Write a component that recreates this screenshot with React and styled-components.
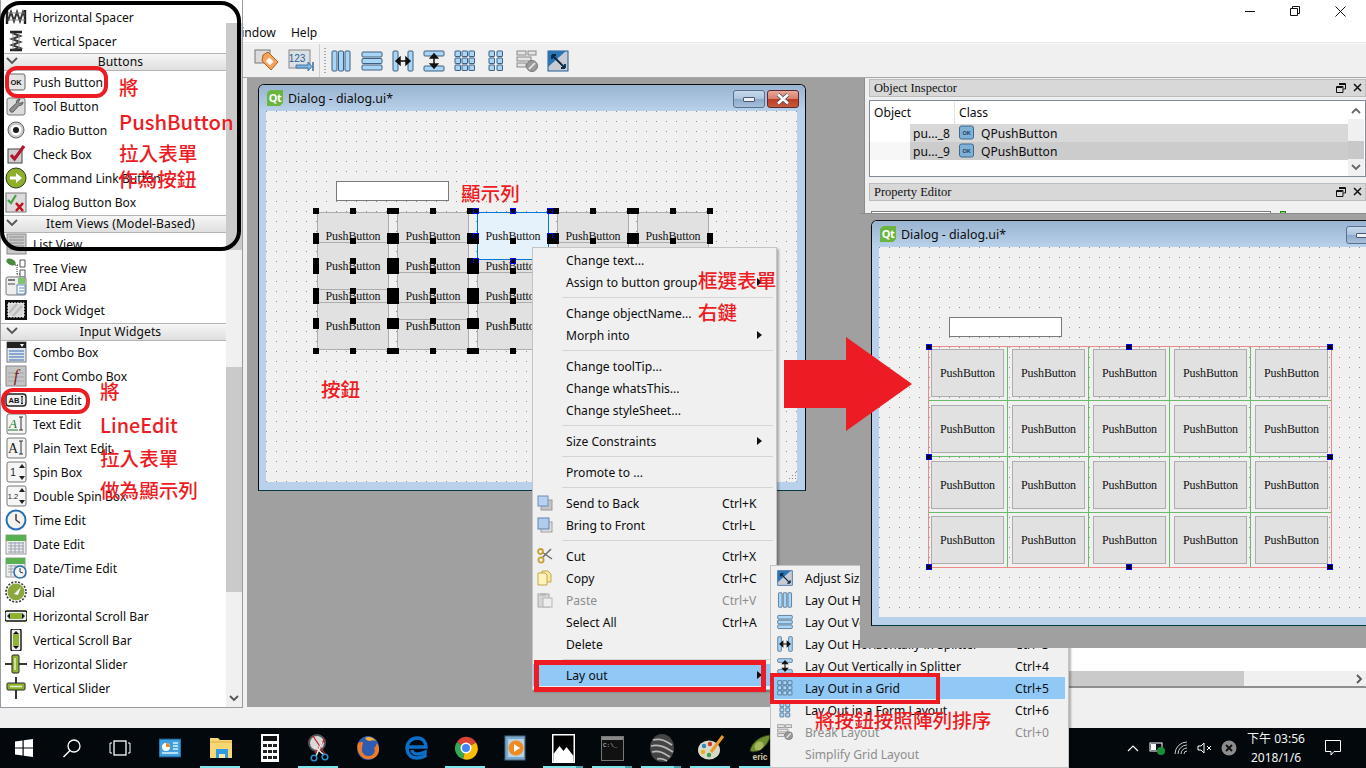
import React from "react";
import styled, { createGlobalStyle, css } from "styled-components";

const UI = `"Noto Sans", "Noto Sans CJK TC", sans-serif`;
const OLD = `"Liberation Serif", "Noto Sans CJK TC", serif`;
const RED = "#ed1c24";

const Global = createGlobalStyle`
  html, body { margin: 0; padding: 0; background: #f0f0f0; }
  * { box-sizing: border-box; }
`;

const Page = styled.div`
  position: relative; width: 1366px; height: 768px; overflow: hidden;
  display: flex; flex-direction: column; background: #f0f0f0;
  font-family: ${UI}; font-size: 12.1px; color: #0c0c0c;
`;
const Desk = styled.div`display: flex; height: 728px;`;

/* ---------- widget box ---------- */
const WidgetBox = styled.aside`
  position: relative; z-index: 2; flex: 0 0 243px; height: 708px; display: flex;
  background: #fff; border: 1px solid #9a9aa2; border-width: 0 1px 1px 1px;
`;
const WidgetList = styled.div`flex: 1; padding-top: 5px; min-width: 0;`;
const Row = styled.div`
  display: flex; align-items: center; height: 24px; padding-left: 4px; gap: 6px;
  margin-top: ${p => p.$tuck || 0}px; white-space: nowrap;
`;
const RowIcon = styled.span`display: flex; width: 22px; height: 22px; flex: none;`;
const SectionHeader = styled.div`
  position: relative; height: 18px; line-height: 16px; text-align: center;
  background: linear-gradient(#f6f6f6, #dfdfdf);
  border-top: 1px solid #b4b4b4; border-bottom: 1px solid #b4b4b4;
  margin-top: ${p => p.$gap || 0}px; margin-bottom: -1px; padding-left: 14px; letter-spacing: .1px;
`;
const SectionChevron = styled.svg`position: absolute; left: 5px; top: 3px;`;
const Rail = styled.div`flex: 0 0 16px; display: flex; flex-direction: column; position: relative; background: #f0f0f0;`;
const RailPart = styled.div`
  flex: 0 0 ${p => p.$h}px;
  background: ${p => p.$tone === "thumb" ? "#cacaca" : p.$tone === "white" ? "#fff" : "#f0f0f0"};
`;
const RailArrow = styled.svg`position: absolute; left: 3px; bottom: 5px;`;

/* ---------- workspace ---------- */
const Workspace = styled.main`flex: 1; display: flex; flex-direction: column; min-width: 0;`;
const TitleStrip = styled.div`
  height: 22px; background: #fff; display: flex; justify-content: flex-end; align-items: center;
  padding-right: 20px; gap: 35px;
`;
const MenuBar = styled.nav`
  height: 21px; background: #fff; display: flex; align-items: center; gap: 15px;
  border-bottom: 1px solid #e6e6e6;
`;
const MenuLabel = styled.span`&:first-child { margin-left: -13px; }`;
const Toolbar = styled.div`
  height: 35px; background: #f0f0f0; border-top: 1px solid #fafafa; border-bottom: 1px solid #a8a8a8;
  display: flex; align-items: center; padding-left: 11px; gap: 8px;
`;
const ToolGroup = styled.div`display: flex; gap: ${p => p.$gap}px; align-items: center; margin-left: ${p => p.$shift || 0}px;`;
const ToolDivider = styled.div`width: 1px; height: 33px; background: #cfcfcf; margin-left: -3px;`;
const ToolGrip = styled.div`
  width: 2px; height: 26px; margin: 0 0 0 -4px;
  background: repeating-linear-gradient(#a8a8a8 0 1px, transparent 1px 3px);
`;
const Main = styled.div`flex: 1; display: flex; min-height: 0;`;
const MdiColumn = styled.div`
  flex: 0 0 622px; padding-left: 4px; display: flex; flex-direction: column; height: 629px;
`;
const Mdi = styled.div`position: relative; isolation: isolate; flex: 1; background: #a0a0a0; border-right: 1px solid #8c8c8c;`;

/* ---------- designer window ---------- */
const Window = styled.div`
  position: absolute; left: ${p => p.$left}px; top: ${p => p.$top}px; width: ${p => p.$w}px; height: ${p => p.$h}px;
  display: flex; flex-direction: column; background: #b9d1ea; padding: 0 8px 8px 7px;
  border: 1px solid #0a0a0a; border-bottom-color: #053a44; border-radius: 6px 6px 0 0;
`;
const WinTitle = styled.div`
  position: relative; height: 26px; flex: none; margin: 0 -8px 0 -7px; padding-left: 8px; display: flex; align-items: center; gap: 5px;
  font-size: 12.4px; background: linear-gradient(#99b4d1, #b9d1ea); border-radius: 5px 5px 0 0;
`;
const QtLogo = styled.span`
  width: 16px; height: 16px; flex: none; background: #69b53f; color: #fff; font: bold 11px/15px ${UI};
  text-align: center; letter-spacing: -.5px;
  clip-path: polygon(3px 0, 100% 0, 100% calc(100% - 3px), calc(100% - 3px) 100%, 0 100%, 0 3px);
`;
const CaptionBtn = styled.span`
  position: absolute; top: 5px; left: ${p => p.$left}px; width: 32px; height: 18px; border-radius: 3px;
  border: 1px solid ${p => p.$close ? "#5a2a30" : "#57708f"}; display: flex; align-items: center; justify-content: center;
  background: ${p => p.$close ? "linear-gradient(#e8a898 0, #d9806c 48%, #bd3c22 52%, #c75a3c 100%)" : "linear-gradient(#c8d9ec 0, #aec4dd 48%, #8eaacb 52%, #a8c0da 100%)"};
`;
const MinBar = styled.span`width: 12px; height: 5px; background: #eef0f4; border: 1px solid #4a5a70; border-radius: 1px;`;
const Client = styled.div`
  position: relative; flex: 1; background-color: #f0f0f0;
  background-image: radial-gradient(circle at .5px .5px, #909090 .6px, transparent .7px);
  background-size: 10px 10px;
`;
const LineEdit = styled.div`
  position: absolute; left: 70px; top: 70px; width: 113px; height: 20px; background: #fff; border: 1px solid #7a7a7a;
`;
const FormCanvas = styled.div`position: absolute; left: 51px; top: 101px; width: 400px; height: 140px;`;
const OldButton = styled.div`
  position: absolute; left: ${p => p.$x}px; top: ${p => p.$y}px; width: 72px; height: 48px; z-index: ${p => p.$z};
  display: flex; align-items: center; justify-content: center;
  font: 12px ${OLD}; color: #111; letter-spacing: -.1px;
  background: ${p => p.$selected ? "#e5f1fb" : "#e1e1e1"}; border: 1px solid ${p => p.$selected ? "#0078d7" : "#adadad"};
`;
const FormRule = styled.div`position: absolute; left: ${p => p.$x}px; top: ${p => p.$y}px; width: 72px; height: 1px; background: #adadad; z-index: 8;`;
const Handle = styled.span`
  position: absolute; left: ${p => p.$x - 3}px; top: ${p => p.$y - 3}px; width: 6px; height: 6px; z-index: 10;
  background: #000; ${p => p.$blue && css`border: 1px solid #0000ff;`}
`;
const Grip = styled.svg`position: absolute; right: 0; bottom: 0;`;

/* grid layout of the second window */
const GridLayout = styled.div`
  position: absolute; left: 50px; top: 100px; display: grid;
  grid-template-columns: 78px repeat(4, 81px); grid-template-rows: 53px 56px 56px 55px;
  outline: 1px solid #ee8a8a;
`;
const GridCell = styled.div`
  display: flex; justify-content: flex-end; align-items: flex-end; padding: 0 3px 3px 0;
  border-left: ${p => p.$col ? "1px solid #69ba69" : "0"}; border-top: ${p => p.$row ? "1px solid #69ba69" : "0"};
`;
const GridButton = styled.div`
  width: 73px; height: 48px; display: flex; align-items: center; justify-content: center;
  font: 12px ${OLD}; color: #111; letter-spacing: -.1px; background: #e1e1e1; border: 1px solid #adadad;
`;

/* ---------- right docks ---------- */
const DockColumn = styled.section`flex: 1; display: flex; flex-direction: column; padding: 1px 0 0 4px; min-width: 0; height: 610px;`;
const DockHead = styled.header`
  height: 18px; flex: none; background: #d8d8d8; border: 1px solid #bcbcbc; display: flex; align-items: center;
  padding: 0 3px 0 4px; font: 12.5px ${OLD}; color: #111; margin-top: ${p => p.$gap || 0}px;
`;
const DockTools = styled.span`margin-left: auto; display: flex; gap: 7px;`;
const ObjectTable = styled.div`
  position: relative; flex: none; margin-top: 3px; height: 77px; background: #fff; border: 1px solid #7f8a96; padding-right: 17px;
`;
const ObjectHeader = styled.div`display: grid; grid-template-columns: 85px 1fr; height: 23px; align-items: center;`;
const HeaderCell = styled.span`
  padding-left: ${p => p.$pad}px; height: 23px; line-height: 23px; border-right: ${p => p.$sep ? "1px solid #e4e4e4" : 0};
`;
const ObjectRow = styled.div`
  display: flex; height: 18px; align-items: center;
  background: linear-gradient(90deg, ${p => p.$alt ? "#f7f7f7" : "#fff"} 40px, ${p => p.$alt ? "#cccccc" : "#d8d8d8"} 40px);
  padding-left: 43px;
`;
const ObjName = styled.span`width: 46px; flex: none;`;
const ObjClass = styled.span`margin-left: 6px;`;
const TableRail = styled.div`
  position: absolute; right: 1px; top: 0; bottom: 0; width: 16px; background: #f0f0f0;
  display: flex; flex-direction: column;
`;
const TableRailWhite = styled.div`height: 18px; background: #fff; display: flex; align-items: center; justify-content: center;`;
const TableThumb = styled.div`margin-top: 22px; height: 18px; background: #c8c8c8;`;
const TableDown = styled.div`flex: 1; display: flex; align-items: center; justify-content: center;`;
const PropertyBody = styled.div`
  flex: 1; display: flex; flex-direction: column; padding-top: 10px; min-height: 0;
`;
const PropertyTools = styled.div`display: flex; height: 6px; align-items: flex-start; padding-left: 2px;`;
const PropertySearch = styled.div`width: 400px; height: 12px; background: #fff; border: 1px solid #7a7a7a;`;
const PropertyFlag = styled.span`width: 6px; height: 6px; margin-left: 9px; background: #7be05a; border: 1px solid #2f7d1f;`;
const PropertySheet = styled.div`
  flex: 1; background: #fff; margin-top: 4px; border-bottom: 2px solid #8f8f8f; display: flex; flex-direction: column; justify-content: flex-end;
`;
const HScroll = styled.div`height: 15px; background: #f0f0f0; position: relative;`;
const HThumb = styled.div`width: 375px; height: 15px; background: #cacaca;`;
const HArrow = styled.svg`position: absolute; right: 3px; top: 3px;`;

/* ---------- menus ---------- */
const PopMenu = styled.div`
  position: absolute; left: ${p => p.$x}px; top: ${p => p.$y}px; width: ${p => p.$w}px; z-index: ${p => p.$z};
  background: #f0f0f0; border: 1px solid #c4c4c4; box-shadow: 2px 2px 2px rgba(0,0,0,.28);
  padding: ${p => p.$pad};
`;
const MenuItem = styled.div`
  position: relative; display: flex; align-items: center; height: 22px; padding-left: ${p => p.$pl}px; white-space: nowrap;
  color: ${p => p.$off ? "#8d8d8d" : "#0c0c0c"};
  background: ${p => p.$on ? "#90c8f6" : "transparent"}; margin-right: ${p => p.$mr || 0}px;
`;
const MenuIcon = styled.span`width: 16px; height: 16px; flex: none; display: flex; margin-right: ${p => p.$gap}px;`;
const Shortcut = styled.span`margin-left: auto; width: ${p => p.$w}px; flex: none;`;
const MenuArrow = styled.span`
  position: absolute; right: 14px; top: 7px; width: 0; height: 0;
  border-left: 5px solid #111; border-top: 4px solid transparent; border-bottom: 4px solid transparent;
`;
const MenuSep = styled.div`height: 9px; padding: 4px 3px 0 ${p => p.$pl}px;
  &::after { content: ""; display: block; height: 1px; background: #d4d4d4; }
`;

/* ---------- pasted screenshot ---------- */
const Pasted = styled.div`
  position: absolute; left: 860px; top: 213px; width: 506px; height: 435px; background: #a0a0a0; overflow: hidden; z-index: 5;
  border-top: 1px solid #8c8c8c;
`;
const BigArrow = styled.svg`position: absolute; left: 784px; top: 337px; z-index: 7;`;

/* ---------- annotations ---------- */
const RedText = styled.div`
  position: absolute; left: ${p => p.$x}px; top: ${p => p.$y - 15}px; z-index: 9; line-height: 30px; white-space: nowrap;
  color: ${RED}; font-family: "Noto Sans CJK TC", sans-serif; font-weight: 500; font-size: ${p => p.$size || 19.6}px;
`;
const Outline = styled.div`
  position: absolute; left: ${p => p.$x}px; top: ${p => p.$y}px; width: ${p => p.$w}px; height: ${p => p.$h}px; z-index: 8;
  border: ${p => p.$b}px solid ${p => p.$color || RED}; border-radius: ${p => p.$r || 0}px;
`;

/* ---------- taskbar ---------- */
const Taskbar = styled.footer`
  height: 40px; background: #02080c; display: flex; align-items: center; position: relative; color: #fff;
`;
const TaskItem = styled.div`
  position: relative; width: ${p => p.$w || 49}px; height: 40px; flex: none; display: flex; align-items: center; justify-content: center;
  ${p => p.$open && css`&::after { content: ""; position: absolute; left: 4px; right: 5px; bottom: 0; height: 2px; background: #7fe3ea; }`}
  ${p => p.$stack && css`&::before { content: ""; position: absolute; right: 5px; bottom: 0; width: 7px; height: 2px; background: #4aa3aa; z-index: 1; }`}
`;
const Tray = styled.div`margin-left: auto; display: flex; align-items: center; height: 40px;`;
const TrayIcon = styled.span`display: flex; width: 24px; justify-content: center;`;
const Clock = styled.div`
  width: 66px; margin-left: 2px; text-align: center; font-size: 12px; line-height: 19px; color: #f4f4f4;
`;
const Notify = styled.span`display: flex; width: 48px; margin-right: 9px; justify-content: center;`;

/* ---------- drawings ---------- */
const S = ({ children, s = 22, v = 22 }) => <svg width={s} height={s} viewBox={`0 0 ${v} ${v}`}>{children}</svg>;

const Icons = {
  hspacer: <S><path d="M2 4v14M20 4v14" stroke="#222" strokeWidth="2.4"/><path d="M3 15 6 6l3 9 3-9 3 9 3-9 2 5" fill="none" stroke="#333" strokeWidth="2"/><path d="M3 7h17M3 14h17" stroke="#888"/></S>,
  vspacer: <S><path d="M5 2h12M5 20h12" stroke="#222" strokeWidth="2.4"/><path d="M7 3l8 3-8 3 8 3-8 3 8 3-8 2" fill="none" stroke="#333" strokeWidth="2"/><path d="M8 3v16M14 3v16" stroke="#999"/></S>,
  push: <S><rect x="2" y="3" width="18" height="16" rx="2" fill="#e4e4e4" stroke="#666"/><path d="M3 18h17v1H3z" fill="#9a9a9a"/><text x="11" y="14" fontSize="7.5" fontFamily="Liberation Sans" fontWeight="700" textAnchor="middle" fill="#111">OK</text></S>,
  tool: <S><rect x="2" y="3" width="18" height="17" rx="2" fill="#dcdcdc" stroke="#777"/><path d="M15 4c-3 0-4 2-3.500 4L5 14c-1 2 1 4 3 3l6-6.500c2 .5 4-1 4-3.500l-3 1.500-1.500-1.500z" fill="#8f8f8f" stroke="#444" strokeWidth=".8"/></S>,
  radio: <S><circle cx="11" cy="11" r="8" fill="#c8c8c8" stroke="#666"/><circle cx="11" cy="11" r="5.500" fill="#fff"/><circle cx="11" cy="11" r="3" fill="#1a1a1a"/></S>,
  check: <S><rect x="3" y="6" width="14" height="14" fill="#d0d0d0" stroke="#444"/><path d="M6 12l3.500 4L19 3" fill="none" stroke="#b3172e" strokeWidth="3.200"/></S>,
  command: <S><circle cx="11" cy="11" r="10" fill="#8fae2a" stroke="#2f3b23"/><path d="M5 9.500h6V6l6 5-6 5v-3.500H5z" fill="#fff"/></S>,
  dialogbox: <S><rect x="1" y="2" width="20" height="19" fill="#dcdcdc" stroke="#777"/><path d="M3 9l3 3 5-8" fill="none" stroke="#3fa23f" strokeWidth="2.200"/><path d="M11 12l7 8M18 12l-7 8" stroke="#c0151f" strokeWidth="2.600"/></S>,
  list: <S><rect x="2" y="1" width="19" height="20" fill="#c8c8c8" stroke="#888"/><path d="M4 4h15M4 7h15M4 10h15M4 13h15M4 16h15" stroke="#8c8c8c"/></S>,
  tree: <S><ellipse cx="6" cy="5" rx="5" ry="3" fill="#4c8a42" transform="rotate(25 6 5)"/><path d="M10 8h4M12 8v9M12 17h3" stroke="#333" strokeDasharray="1 1"/><path d="M15 3h5v7h-5zM15 13h5v7h-5z" fill="#fff" stroke="#555"/></S>,
  mdi: <S><rect x="1" y="2" width="20" height="18" rx="2" fill="#eee" stroke="#777"/><rect x="13" y="3" width="7" height="6" fill="#7ec46f"/><rect x="3" y="4" width="7" height="2" fill="#777"/><rect x="3" y="8" width="7" height="2" fill="#999"/><rect x="12" y="10" width="8" height="9" fill="#fff" stroke="#5b88bd"/><path d="M14 13h5M14 16h5" stroke="#5b88bd"/></S>,
  dock: <S><rect x="0" y="1" width="22" height="20" fill="#111"/><rect x="3" y="4" width="16" height="14" fill="#d9d9d9" stroke="#fff" strokeDasharray="2 1"/><path d="M4 14l8-9M8 17l9-10" stroke="#bbb" strokeWidth="2"/></S>,
  combo: <S><rect x="2" y="1" width="19" height="20" fill="#dfe5ee" stroke="#777"/><rect x="2" y="1" width="19" height="6" fill="#222"/><path d="M15 3h4l-2 3z" fill="#fff"/><path d="M4 10h15M4 13h15M4 16h15M4 19h15" stroke="#6d92c2" strokeWidth="1.600"/></S>,
  fontcombo: <S><rect x="1" y="1" width="20" height="20" fill="#c4c4c4" stroke="#888"/><path d="M3 8h16M3 12h16M3 16h16" stroke="#a6a6a6"/><text x="11" y="16" fontSize="17" fontFamily="Liberation Serif" fontStyle="italic" textAnchor="middle" fill="#7f1d22">f</text></S>,
  lineedit: <S><rect x="1" y="5" width="20" height="12" rx="3" fill="#eee" stroke="#222" strokeWidth="1.400"/><text x="9" y="14" fontSize="7.500" fontFamily="Liberation Sans" fontWeight="700" textAnchor="middle" fill="#111">AB</text><path d="M17 8v6M16 7.500h2M16 14.500h2" stroke="#111"/></S>,
  textedit: <S><rect x="2" y="1" width="19" height="20" rx="2" fill="#f4f4f4" stroke="#777"/><text x="8" y="15" fontSize="13" fontFamily="Liberation Serif" textAnchor="middle" fill="#1c7a2a" fontStyle="italic">A</text><path d="M3 17h10" stroke="#1c7a2a"/><path d="M16 4v13M14 4h4M14 17h4" stroke="#333"/></S>,
  plain: <S><rect x="2" y="1" width="19" height="20" rx="2" fill="#f4f4f4" stroke="#777"/><text x="8" y="16" fontSize="14" fontFamily="Liberation Serif" textAnchor="middle" fill="#222">A</text><path d="M16 4v13M14 4h4M14 17h4" stroke="#333"/></S>,
  spin: <S><rect x="2" y="1" width="19" height="20" rx="2" fill="#f6f6f6" stroke="#777"/><text x="8" y="15" fontSize="10" fontFamily="Liberation Sans" textAnchor="middle" fill="#222">1</text><path d="M17 3l3 4h-6zM17 19l3-4h-6z" fill="#222"/></S>,
  dspin: <S><rect x="2" y="1" width="19" height="20" rx="2" fill="#f6f6f6" stroke="#777"/><text x="8" y="14" fontSize="7.500" fontFamily="Liberation Sans" textAnchor="middle" fill="#222">1.2</text><path d="M17 3l3 4h-6zM17 19l3-4h-6z" fill="#222"/></S>,
  time: <S><circle cx="11" cy="11" r="9.500" fill="#f2f2ee" stroke="#2a6fb5" strokeWidth="2"/><path d="M11 5v6l4 3" fill="none" stroke="#333" strokeWidth="1.400"/></S>,
  date: <S><rect x="1" y="2" width="20" height="19" fill="#eee" stroke="#999"/><rect x="1" y="2" width="20" height="6" fill="#58b050"/><path d="M3 10h16M3 13h16M3 16h16M3 19h16M6 9v11M10 9v11M14 9v11M18 9v11" stroke="#9aa3b0"/></S>,
  datetime: <S><rect x="1" y="1" width="19" height="19" fill="#eee" stroke="#999"/><rect x="1" y="1" width="19" height="6" fill="#58b050"/><path d="M3 9h15M3 12h15M3 15h15M6 8v11M10 8v11M14 8v11" stroke="#9aa3b0"/><circle cx="15" cy="15" r="6" fill="#f2f2ee" stroke="#2a6fb5" strokeWidth="1.600"/><path d="M15 11v4l3 1" fill="none" stroke="#333"/></S>,
  dial: <S><circle cx="11" cy="11" r="10" fill="none" stroke="#333" strokeWidth="1.600" strokeDasharray="2 1.500"/><circle cx="11" cy="11" r="8.500" fill="#8ba83c"/><path d="M9 13l7-7-3 8z" fill="#f4f4f4"/></S>,
  hscroll: <S><rect x="0" y="6" width="22" height="10" rx="2" fill="#eee" stroke="#111" strokeWidth="1.400"/><rect x="5" y="8" width="12" height="6" fill="#8db52f"/><path d="M2 11l3-3v6zM20 11l-3-3v6z" fill="#111"/></S>,
  vscroll: <S><rect x="6" y="0" width="10" height="22" rx="2" fill="#eee" stroke="#111" strokeWidth="1.400"/><rect x="8" y="5" width="6" height="12" fill="#8db52f"/><path d="M11 2l3 3H8zM11 20l3-3H8z" fill="#111"/></S>,
  hslider: <S><path d="M0 11h22" stroke="#222" strokeWidth="1.800"/><rect x="7" y="2" width="7" height="18" rx="1" fill="#8db52f" stroke="#2a2a2a"/><path d="M10 5v12" stroke="#e8f0c8" strokeWidth="1.500"/></S>,
  vslider: <S><path d="M11 0v22" stroke="#222" strokeWidth="1.800"/><rect x="2" y="6" width="18" height="7" rx="1" fill="#8db52f" stroke="#2a2a2a"/><path d="M5 9.500h12" stroke="#e8f0c8" strokeWidth="1.500"/></S>,
};

const blue = { fill: "#a9d6f7", stroke: "#3f5f80" };
const Lay = {
  h: <S><rect x="2" y="1" width="5" height="20" rx="1" {...blue}/><rect x="8.500" y="1" width="5" height="20" rx="1" {...blue}/><rect x="15" y="1" width="5" height="20" rx="1" {...blue}/></S>,
  v: <S><rect x="1" y="2" width="20" height="5" rx="1" {...blue}/><rect x="1" y="8.500" width="20" height="5" rx="1" {...blue}/><rect x="1" y="15" width="20" height="5" rx="1" {...blue}/></S>,
  hs: <S><rect x="1" y="1" width="5" height="20" rx="1" {...blue}/><rect x="16" y="1" width="5" height="20" rx="1" {...blue}/><path d="M4 11h14M4 11l4-3.500v7zM18 11l-4-3.500v7z" stroke="#111" strokeWidth="1.500" fill="#111"/></S>,
  vs: <S><rect x="1" y="1" width="20" height="5" rx="1" {...blue}/><rect x="1" y="16" width="20" height="5" rx="1" {...blue}/><path d="M11 4v14M11 4L7.500 8h7zM11 18l-3.500-4h7z" stroke="#111" strokeWidth="1.500" fill="#111"/></S>,
  g: <S>{[1, 8, 15].flatMap(y => [1, 8, 15].map(x => <rect key={x + "-" + y} x={x} y={y} width="5.500" height="5.500" rx=".5" {...blue}/>))}</S>,
  f: <S>{[1, 8, 15].flatMap(y => [4, 12].map(x => <rect key={x + "-" + y} x={x} y={y} width="5.500" height="5.500" rx=".5" {...blue}/>))}</S>,
  b: <S><g fill="#e4e4e4" stroke="#888"><rect x="1" y="1" width="9" height="4"/><rect x="12" y="1" width="8" height="4"/><rect x="1" y="7" width="14" height="4"/><rect x="1" y="13" width="9" height="4"/></g><circle cx="16" cy="16" r="5.500" fill="#9a9a9a" stroke="#777"/><path d="M13 19l6-6" stroke="#eee" strokeWidth="1.600"/></S>,
  a: <S><rect x="1" y="1" width="20" height="20" fill="#c8ccd2" stroke="#1d5d96"/><path d="M1 1h18L1 17z" fill="#2c74b4"/><path d="M5 5l13 13M5 5h4M5 5v4M18 18h-4M18 18v-4" stroke="#0b2a44" strokeWidth="1.800" fill="none"/></S>,
};

const Tag = <svg width="26" height="26" viewBox="0 0 26 26"><rect x="1" y="2" width="15" height="13" fill="#dcdcdc" stroke="#777"/><path d="M9 7l5-3 10 10-7 8L8 13z" fill="#f4a35a" stroke="#b4601a"/><rect x="13" y="11" width="6" height="5" fill="#fff" transform="rotate(45 16 13)"/></svg>;
const Tab123 = <svg width="26" height="26" viewBox="0 0 26 26"><rect x="1" y="2" width="21" height="18" fill="#dcdfe3" stroke="#888"/><text x="9" y="14" fontSize="10" fontFamily="Liberation Sans" textAnchor="middle" fill="#245f9c">123</text><path d="M8 17h12v-3l4 4.500-4 4.500v-3H8z" fill="#7eb6e6" stroke="#2e5f90" strokeWidth=".8"/><path d="M25 14v9" stroke="#2e5f90" strokeWidth="1.400"/></svg>;

const MiniChevron = ({ up, color = "#666" }) => (
  <svg width="10" height="7" viewBox="0 0 10 7"><path d={up ? "M1 6l4-4 4 4" : "M1 1l4 4 4-4"} fill="none" stroke={color} strokeWidth="1.800"/></svg>
);
const FloatIcon = () => <svg width="10" height="10" viewBox="0 0 10 10"><path d="M3 .5h6.500V6H7.500M.5 3.500h6.500v6H.5z" fill="none" stroke="#111"/><path d="M3 1.500h6M1 4.500h5.500" stroke="#111"/></svg>;
const CloseIcon = () => <svg width="9" height="9" viewBox="0 0 9 9"><path d="M1 1l7 7M8 1L1 8" stroke="#111" strokeWidth="1.500"/></svg>;
const SmallOk = () => <svg width="16" height="16" viewBox="0 0 16 16"><rect x=".5" y="1" width="14" height="13" rx="2" fill="#7fb0d6" stroke="#3d6a92"/><text x="7.500" y="10" fontSize="5.500" fontFamily="Liberation Sans" fontWeight="700" textAnchor="middle" fill="#25425c">OK</text></svg>;

const Menu16 = {
  back: <S s={16} v={16}><rect x="4" y="5" width="11" height="10" fill="#c4c4c4" stroke="#999"/><rect x="1" y="1" width="10" height="10" fill="#b7d2f0" stroke="#6d8fb6"/></S>,
  front: <S s={16} v={16}><rect x="4" y="5" width="11" height="10" fill="#dedede" stroke="#a0a0a0"/><rect x="1" y="1" width="11" height="11" fill="#b0ccec" stroke="#5f83ad"/></S>,
  cut: <S s={16} v={16}><path d="M14 1L5 10M15 11L5 4" stroke="#6d6d6d" strokeWidth="1.500"/><circle cx="4" cy="12" r="2.600" fill="none" stroke="#c9a234" strokeWidth="1.800"/><circle cx="3.500" cy="3.500" r="2.500" fill="none" stroke="#c9a234" strokeWidth="1.800"/></S>,
  copy: <S s={16} v={16}><path d="M5 1h6l3 3v8H5z" fill="#f6e7a2" stroke="#c2a949"/><path d="M1 3h7l2 2v10H1z" fill="#fff2bd" stroke="#c2a949"/></S>,
  paste: <S s={16} v={16}><rect x="1" y="2" width="11" height="13" fill="#d6d6d6" stroke="#aaa"/><rect x="6" y="6" width="9" height="9" fill="#eee" stroke="#b4b4b4"/><rect x="3" y="1" width="6" height="3" fill="#bbb"/></S>,
};

const TaskIcons = [
  { k: "win", w: 48, d: <svg width="20" height="20" viewBox="0 0 20 20"><path d="M1 3.500L8.500 2.400v7H1zM9.700 2.300L19 1v8.400H9.700zM1 10.600h7.500v7L1 16.500zM9.700 10.600H19V19l-9.300-1.300z" fill="#fff"/></svg> },
  { k: "search", w: 48, d: <svg width="20" height="20" viewBox="0 0 20 20"><circle cx="12" cy="8" r="6" fill="none" stroke="#fff" strokeWidth="1.300"/><path d="M8 12.500L1.500 19" stroke="#fff" strokeWidth="1.500"/></svg> },
  { k: "view", w: 48, d: <svg width="22" height="16" viewBox="0 0 22 16"><rect x="5" y="1" width="12" height="14" fill="none" stroke="#fff" strokeWidth="1.300"/><path d="M3 3H1v10h2M19 3h2v10h-2" fill="none" stroke="#fff"/></svg> },
  { k: "panel", w: 52, d: <svg width="22" height="20" viewBox="0 0 22 20"><rect x="0" y="1" width="22" height="18" fill="#3ea0de" stroke="#15507c"/><circle cx="7" cy="9" r="4" fill="#fff"/><path d="M7 9V5a4 4 0 0 1 4 4z" fill="#f08a24"/><path d="M14 5h5M14 8h5M14 11h5M3 15h16" stroke="#dff2ff" strokeWidth="1.300"/></svg> },
  { k: "folder", open: true, d: <svg width="24" height="24" viewBox="0 0 24 24"><path d="M1 2h8l2 2h12v18H1z" fill="#f8d775"/><path d="M1 6h22" stroke="#e0b040"/><rect x="7" y="13" width="12" height="9" fill="#2f9be0"/><rect x="10" y="18" width="6" height="4" fill="#fce9a8"/></svg> },
  { k: "calc", d: <svg width="20" height="28" viewBox="0 0 20 28"><rect x="1" y="0" width="18" height="28" fill="#fff"/><rect x="3" y="2" width="14" height="5" fill="#111"/><g fill="#222"><rect x="3" y="10" width="4" height="3"/><rect x="8" y="10" width="4" height="3"/><rect x="13" y="10" width="4" height="3"/><rect x="3" y="16" width="4" height="3"/><rect x="8" y="16" width="4" height="3"/><rect x="13" y="16" width="4" height="3"/><rect x="3" y="22" width="4" height="3"/><rect x="8" y="22" width="4" height="3"/><rect x="13" y="22" width="4" height="3"/></g></svg> },
  { k: "snip", open: true, d: <svg width="24" height="28" viewBox="0 0 24 28"><circle cx="10" cy="9" r="8" fill="#d8d8d8" stroke="#555" strokeWidth="2"/><path d="M6 2l12 18M18 5L8 19" stroke="#c02a2a" strokeWidth="1.300"/><path d="M7 12l10 9M15 8L9 22" stroke="#e8e8e8" strokeWidth="1.600"/><circle cx="7" cy="24" r="2.800" fill="none" stroke="#2e8fc8" strokeWidth="1.500"/><circle cx="18" cy="23" r="2.800" fill="none" stroke="#2e8fc8" strokeWidth="1.500"/></svg> },
  { k: "fox", d: <svg width="24" height="28" viewBox="0 0 24 28"><ellipse cx="12" cy="14" rx="11" ry="12" fill="#2f5cb0"/><path d="M2 9c-1 4-1 9 3 13 5 5 14 4 17-2 2-4 1-8-1-11-1 2-1 4-3 5 2 3 0 7-4 8-5 1-9-3-8-8 0-2 1-4 1-6-2 0-4 0-5 1z" fill="#ee7c23"/><path d="M9 4c3-2 8-1 11 3-3-1-4-1-6 0-2 0-4-1-5-3z" fill="#f5b030"/></svg> },
  { k: "edge", d: <svg width="24" height="28" viewBox="0 0 24 28"><path d="M3 13h18c0-5-3-9-9-9-6 0-10 5-10 10 0 6 4 10 10 10 3 0 6-1 8-2v-4c-2 1-5 2-7 2-4 0-6-2-6-4" fill="none" stroke="#0a6fc8" strokeWidth="3.400"/></svg> },
  { k: "chrome", open: true, d: <svg width="24" height="24" viewBox="0 0 24 24"><path d="M12 12L3 6a11 11 0 0 1 19 .5z" fill="#dc4437"/><path d="M12 12L3 6a11 11 0 0 0 6 17z" fill="#36a852"/><path d="M12 12l10-5.500A11 11 0 0 1 9 23z" fill="#fbbc05"/><circle cx="12" cy="12" r="5.500" fill="#fff"/><circle cx="12" cy="12" r="4" fill="#4285f4"/></svg> },
  { k: "media", d: <svg width="22" height="26" viewBox="0 0 22 26"><rect x="1" y="1" width="20" height="24" fill="#7da8c8" stroke="#406a88"/><rect x="4" y="4" width="16" height="18" fill="#b8d2e4"/><circle cx="12" cy="13" r="7.500" fill="#f08a1e"/><path d="M10 9l6 4-6 4z" fill="#fff"/></svg> },
  { k: "photo", open: true, stack: true, d: <svg width="23" height="29" viewBox="0 0 23 29"><rect x="0" y="0" width="23" height="29" fill="#fff"/><rect x="1.500" y="1.500" width="20" height="26" fill="#000"/><path d="M1.500 28V20l6-8 4 5 3-4 7 9v6z" fill="#fff"/></svg> },
  { k: "cmd", open: true, stack: true, d: <svg width="23" height="25" viewBox="0 0 23 25"><rect x=".5" y=".5" width="22" height="24" fill="#111" stroke="#777"/><rect x="1" y="1" width="21" height="3" fill="#888"/><text x="2" y="11" fontSize="6" fontFamily="Liberation Mono" fill="#ccc">C:\_</text></svg> },
  { k: "orb", open: true, stack: true, d: <svg width="26" height="28" viewBox="0 0 26 28"><ellipse cx="13" cy="14" rx="12" ry="14" fill="#444"/><path d="M4 6c8-2 13 1 19 5M2 12c8-2 14 1 22 6M3 18c7-2 12 1 18 5M8 25c4-1 7 0 10 2" fill="none" stroke="#b8b8b8" strokeWidth="1.800"/></svg> },
  { k: "paint", open: true, d: <svg width="28" height="28" viewBox="0 0 28 28"><ellipse cx="12" cy="16" rx="11" ry="9.500" fill="#d9d9c8"/><circle cx="7" cy="12" r="2.200" fill="#2e86c8"/><circle cx="13" cy="10" r="2.200" fill="#d0342c"/><circle cx="6" cy="18" r="2.200" fill="#e4b020"/><circle cx="12" cy="21" r="2.200" fill="#3aa04a"/><path d="M14 18L26 2" stroke="#e89a2a" strokeWidth="3"/></svg> },
  { k: "eric", open: true, d: <svg width="26" height="28" viewBox="0 0 26 28"><path d="M3 17C4 9 13 2 23 1c0 7-7 16-17 17z" fill="#6f8f2d" stroke="#2f4015"/><ellipse cx="12" cy="12" rx="4" ry="5" fill="#a8b85c" transform="rotate(45 12 12)"/><text x="13" y="26" fontSize="8.500" fontFamily="Liberation Sans" fontWeight="700" textAnchor="middle" fill="#d6c9a0">eric</text></svg> },
];

const topRows = [["hspacer", "Horizontal Spacer"], ["vspacer", "Vertical Spacer"]];
const buttonRows = [["push", "Push Button"], ["tool", "Tool Button"], ["radio", "Radio Button"], ["check", "Check Box"], ["command", "Command Link Button"], ["dialogbox", "Dialog Button Box"]];
const inputRows = [["combo", "Combo Box"], ["fontcombo", "Font Combo Box"], ["lineedit", "Line Edit"], ["textedit", "Text Edit"], ["plain", "Plain Text Edit"], ["spin", "Spin Box"], ["dspin", "Double Spin Box"], ["time", "Time Edit"], ["date", "Date Edit"], ["datetime", "Date/Time Edit"], ["dial", "Dial"], ["hscroll", "Horizontal Scroll Bar"], ["vscroll", "Vertical Scroll Bar"], ["hslider", "Horizontal Slider"], ["vslider", "Vertical Slider"]];

const WRow = ({ icon, label, tuck }) => (
  <Row $tuck={tuck}><RowIcon>{Icons[icon]}</RowIcon><span>{label}</span></Row>
);
const Section = ({ title, gap }) => (
  <SectionHeader $gap={gap}>
    <SectionChevron width="12" height="8" viewBox="0 0 12 8"><path d="M1 1l5 5 5-5" fill="none" stroke="#555" strokeWidth="1.800"/></SectionChevron>
    {title}
  </SectionHeader>
);

const Caption = ({ title, minLeft }) => (
  <WinTitle>
    <QtLogo>Qt</QtLogo>
    <span>{title}</span>
    <CaptionBtn $left={minLeft}><MinBar /></CaptionBtn>
    <CaptionBtn $left={minLeft + 34} $close>
      <svg width="14" height="12" viewBox="0 0 14 12"><path d="M2 1.500l10 9M12 1.500l-10 9" stroke="#4a5260" strokeWidth="4.200"/><path d="M2 1.500l10 9M12 1.500l-10 9" stroke="#fff" strokeWidth="2.600"/></svg>
    </CaptionBtn>
  </WinTitle>
);

const rowsTop = [0, 30, 60, 90];
const colsLeft = [0, 80, 160, 240, 320];
const zMap = { 0: [1, 3, 1, 3], 1: [1, 2, 3, 1], 2: [6, 1, 2, 3], 3: [1, 2, 3, 4], 4: [1, 2, 3, 4] };

const FormButtons = () => (
  <FormCanvas>
    {colsLeft.map((x, ci) => rowsTop.map((y, ri) => (
      <React.Fragment key={ci + "-" + ri}>
        <OldButton $x={x} $y={y} $z={zMap[ci][ri]} $selected={ci === 2 && ri === 0}>PushButton</OldButton>
        {[[x - 1, y - 1], [x + 36, y - 1], [x + 73, y - 1], [x - 1, y + 24], [x + 73, y + 24], [x - 1, y + 49], [x + 36, y + 49], [x + 73, y + 49]].map(([hx, hy], i) => (
          <Handle key={i} $x={hx} $y={hy} $blue={ci === 2 && ri === 0} />
        ))}
      </React.Fragment>
    )))}
    <FormRule $x={80} $y={90} />
  </FormCanvas>
);

const gridHandles = [[0, 0], [200, 0], [401, 0], [0, 110], [401, 110], [0, 220], [200, 220], [401, 220]];
const GridForm = () => (
  <GridLayout>
    {[0, 1, 2, 3].flatMap(r => [0, 1, 2, 3, 4].map(c => (
      <GridCell key={r + "-" + c} $row={r} $col={c}><GridButton>PushButton</GridButton></GridCell>
    )))}
    {gridHandles.map(([x, y], i) => <Handle key={i} $x={x} $y={y} $blue />)}
  </GridLayout>
);

const CtxItem = ({ children, icon, sc, arrow, off, on }) => (
  <MenuItem $pl={4} $off={off} $on={on}>
    <MenuIcon $gap={13}>{icon && Menu16[icon]}</MenuIcon>
    <span>{children}</span>
    {sc && <Shortcut $w={54}>{sc}</Shortcut>}
    {arrow && <MenuArrow />}
  </MenuItem>
);
const CtxSep = () => <MenuSep $pl={29} />;

const ContextMenu = () => (
  <PopMenu $x={532} $y={247} $w={245} $z={3} $pad="1px 0 3px">
    <CtxItem>Change text...</CtxItem>
    <CtxItem arrow>Assign to button group</CtxItem>
    <CtxSep />
    <CtxItem>Change objectName...</CtxItem>
    <CtxItem arrow>Morph into</CtxItem>
    <CtxSep />
    <CtxItem>Change toolTip...</CtxItem>
    <CtxItem>Change whatsThis...</CtxItem>
    <CtxItem>Change styleSheet...</CtxItem>
    <CtxSep />
    <CtxItem arrow>Size Constraints</CtxItem>
    <CtxSep />
    <CtxItem>Promote to ...</CtxItem>
    <CtxSep />
    <CtxItem icon="back" sc="Ctrl+K">Send to Back</CtxItem>
    <CtxItem icon="front" sc="Ctrl+L">Bring to Front</CtxItem>
    <CtxSep />
    <CtxItem icon="cut" sc="Ctrl+X">Cut</CtxItem>
    <CtxItem icon="copy" sc="Ctrl+C">Copy</CtxItem>
    <CtxItem icon="paste" sc="Ctrl+V" off>Paste</CtxItem>
    <CtxItem sc="Ctrl+A">Select All</CtxItem>
    <CtxItem>Delete</CtxItem>
    <CtxSep />
    <CtxItem arrow on>Lay out</CtxItem>
  </PopMenu>
);

const subItems = [
  ["a", "Adjust Size", "Ctrl+J"], ["h", "Lay Out Horizontally", "Ctrl+1"], ["v", "Lay Out Vertically", "Ctrl+2"],
  ["hs", "Lay Out Horizontally in Splitter", "Ctrl+3"], ["vs", "Lay Out Vertically in Splitter", "Ctrl+4"],
  ["g", "Lay Out in a Grid", "Ctrl+5", "on"], ["f", "Lay Out in a Form Layout", "Ctrl+6"], ["b", "Break Layout", "Ctrl+0", "off"], [null, "Simplify Grid Layout", null, "off"],
];
const SubMenu = () => (
  <PopMenu $x={770} $y={565} $w={299} $z={4} $pad="1px 0 2px">
    {subItems.map(([ic, label, sc, st]) => (
      <MenuItem key={label} $pl={6} $mr={3} $on={st === "on"} $off={st === "off"}>
        <MenuIcon $gap={12}>{ic && <S s={16}>{Lay[ic].props.children}</S>}</MenuIcon>
        <span>{label}</span>
        {sc && <Shortcut $w={50}>{sc}</Shortcut>}
      </MenuItem>
    ))}
  </PopMenu>
);

export default function App() {
  return (
    <Page>
      <Global />
      <Desk>
        <WidgetBox>
          <WidgetList>
            {topRows.map(([i, l]) => <WRow key={l} icon={i} label={l} />)}
            <Section title="Buttons" />
            {buttonRows.map(([i, l]) => <WRow key={l} icon={i} label={l} />)}
            <Section title="Item Views (Model-Based)" gap={1} />
            <WRow icon="list" label="List View" />
            <WRow icon="tree" label="Tree View" />
            <WRow icon="mdi" label="MDI Area" tuck={-6} />
            <WRow icon="dock" label="Dock Widget" />
            <Section title="Input Widgets" gap={1} />
            {inputRows.map(([i, l]) => <WRow key={l} icon={i} label={l} />)}
          </WidgetList>
          <Rail>
            <RailPart $h={23} $tone="white" />
            <RailPart $h={227} $tone="thumb" />
            <RailPart $h={117} />
            <RailPart $h={225} $tone="thumb" />
            <RailArrow width="10" height="7" viewBox="0 0 10 7"><path d="M1 1l4 4 4-4" fill="none" stroke="#555" strokeWidth="1.800"/></RailArrow>
          </Rail>
        </WidgetBox>
        <Workspace>
          <TitleStrip>
            <svg width="10" height="1" viewBox="0 0 10 1"><path d="M0 .5h10" stroke="#111"/></svg>
            <svg width="10" height="10" viewBox="0 0 10 10"><path d="M2.500 2.500V.5h7v7h-2M.5 2.500h7v7h-7z" fill="none" stroke="#111"/></svg>
            <svg width="11" height="11" viewBox="0 0 11 11"><path d="M.5.5l10 10M10.500.5l-10 10" stroke="#111"/></svg>
          </TitleStrip>
          <MenuBar>
            <MenuLabel>Window</MenuLabel>
            <MenuLabel>Help</MenuLabel>
          </MenuBar>
          <Toolbar>
            <ToolGroup $gap={8}>{Tag}{Tab123}</ToolGroup>
            <ToolDivider />
            <ToolGrip />
            <ToolGroup $gap={9} $shift={-4}>{["h", "v", "hs", "vs", "g", "f", "b", "a"].map(k => <React.Fragment key={k}>{Lay[k]}</React.Fragment>)}</ToolGroup>
          </Toolbar>
          <Main>
            <MdiColumn>
              <Mdi>
                <Window $left={11} $top={6} $w={548} $h={407}>
                  <Caption title="Dialog - dialog.ui*" minLeft={474} />
                  <Client>
                    <LineEdit />
                    <FormButtons />
                    <Grip width="12" height="12" viewBox="0 0 12 12"><path d="M10 2h1v1h-1zM7 5h1v1H7zM10 5h1v1h-1zM4 8h1v1H4zM7 8h1v1H7zM10 8h1v1h-1z" fill="#888"/></Grip>
                  </Client>
                </Window>
              </Mdi>
            </MdiColumn>
            <DockColumn>
              <DockHead>Object Inspector<DockTools><FloatIcon /><CloseIcon /></DockTools></DockHead>
              <ObjectTable>
                <ObjectHeader>
                  <HeaderCell $pad={4} $sep>Object</HeaderCell>
                  <HeaderCell $pad={4}>Class</HeaderCell>
                </ObjectHeader>
                <ObjectRow><ObjName>pu..._8</ObjName><SmallOk /><ObjClass>QPushButton</ObjClass></ObjectRow>
                <ObjectRow $alt><ObjName>pu..._9</ObjName><SmallOk /><ObjClass>QPushButton</ObjClass></ObjectRow>
                <TableRail>
                  <TableRailWhite><MiniChevron up /></TableRailWhite>
                  <TableThumb />
                  <TableDown><MiniChevron /></TableDown>
                </TableRail>
              </ObjectTable>
              <DockHead $gap={6}>Property Editor<DockTools><FloatIcon /><CloseIcon /></DockTools></DockHead>
              <PropertyBody>
                <PropertyTools><PropertySearch /><PropertyFlag /></PropertyTools>
                <PropertySheet>
                  <HScroll>
                    <HThumb />
                    <HArrow width="7" height="10" viewBox="0 0 7 10"><path d="M1 1l4 4-4 4" fill="none" stroke="#555" strokeWidth="1.800"/></HArrow>
                  </HScroll>
                </PropertySheet>
              </PropertyBody>
            </DockColumn>
          </Main>
        </Workspace>
      </Desk>

      <Taskbar>
        {TaskIcons.map(t => <TaskItem key={t.k} $w={t.w} $open={t.open} $stack={t.stack}>{t.d}</TaskItem>)}
        <Tray>
          <TrayIcon><svg width="12" height="7" viewBox="0 0 12 7"><path d="M1 6l5-5 5 5" fill="none" stroke="#fff" strokeWidth="1.200"/></svg></TrayIcon>
          <TrayIcon><svg width="16" height="14" viewBox="0 0 16 14"><rect x="1" y="2" width="12" height="8" fill="none" stroke="#fff"/><rect x="2" y="3" width="5" height="6" fill="#fff"/><circle cx="12" cy="10" r="4" fill="#1a8f3a"/></svg></TrayIcon>
          <TrayIcon><svg width="15" height="14" viewBox="0 0 15 14"><path d="M1 13a12 12 0 0 1 12-12M4 13a9 9 0 0 1 9-9M7 13a6 6 0 0 1 6-6M10 13a3 3 0 0 1 3-3" fill="none" stroke="#ccc"/></svg></TrayIcon>
          <TrayIcon><svg width="16" height="14" viewBox="0 0 16 14"><path d="M1 5h3l3-3v10L4 9H1z" fill="none" stroke="#fff"/><path d="M10 5l4 4M14 5l-4 4" stroke="#fff"/></svg></TrayIcon>
          <TrayIcon><svg width="16" height="16" viewBox="0 0 16 16"><circle cx="8" cy="8" r="7.500" fill="#8d8d8d"/><path d="M5 5l6 6M11 5l-6 6" stroke="#111" strokeWidth="1.800"/></svg></TrayIcon>
          <Clock>下午 03:56<br />2018/1/6</Clock>
          <Notify><svg width="16" height="16" viewBox="0 0 16 16"><path d="M.5.5h15v11H9l-3 3.500v-3.500H.5z" fill="none" stroke="#fff"/></svg></Notify>
        </Tray>
      </Taskbar>

      <ContextMenu />
      <SubMenu />

      <Pasted>
        <Window $left={11} $top={6} $w={600} $h={406}>
          <Caption title="Dialog - dialog.ui*" minLeft={474} />
          <Client>
            <LineEdit />
            <GridForm />
          </Client>
        </Window>
      </Pasted>

      <BigArrow width="128" height="94" viewBox="0 0 128 94"><polygon points="0,23 62,23 62,0 128,47 62,94 62,71 0,71" fill={RED}/></BigArrow>

      <Outline $x={0} $y={1} $w={241} $h={250} $b={4} $r={20} $color="#000" />
      <Outline $x={5} $y={66} $w={103} $h={32} $b={4} $r={12} />
      <Outline $x={1} $y={388} $w={89} $h={26} $b={4} $r={12} />
      <Outline $x={534} $y={660} $w={232} $h={32} $b={5} />
      <Outline $x={770} $y={673} $w={170} $h={31} $b={4} />

      <RedText $x={119} $y={87}>將</RedText>
      <RedText $x={119} $y={121} $size={20.3}>PushButton</RedText>
      <RedText $x={119} $y={153}>拉入表單</RedText>
      <RedText $x={118} $y={179}>作為按鈕</RedText>
      <RedText $x={100} $y={391}>將</RedText>
      <RedText $x={100} $y={425} $size={19.8}>LineEdit</RedText>
      <RedText $x={100} $y={458}>拉入表單</RedText>
      <RedText $x={100} $y={490}>做為顯示列</RedText>
      <RedText $x={461} $y={193}>顯示列</RedText>
      <RedText $x={321} $y={389}>按鈕</RedText>
      <RedText $x={698} $y={280}>框選表單</RedText>
      <RedText $x={698} $y={312}>右鍵</RedText>
      <RedText $x={815} $y={720}>將按鈕按照陣列排序</RedText>
    </Page>
  );
}
